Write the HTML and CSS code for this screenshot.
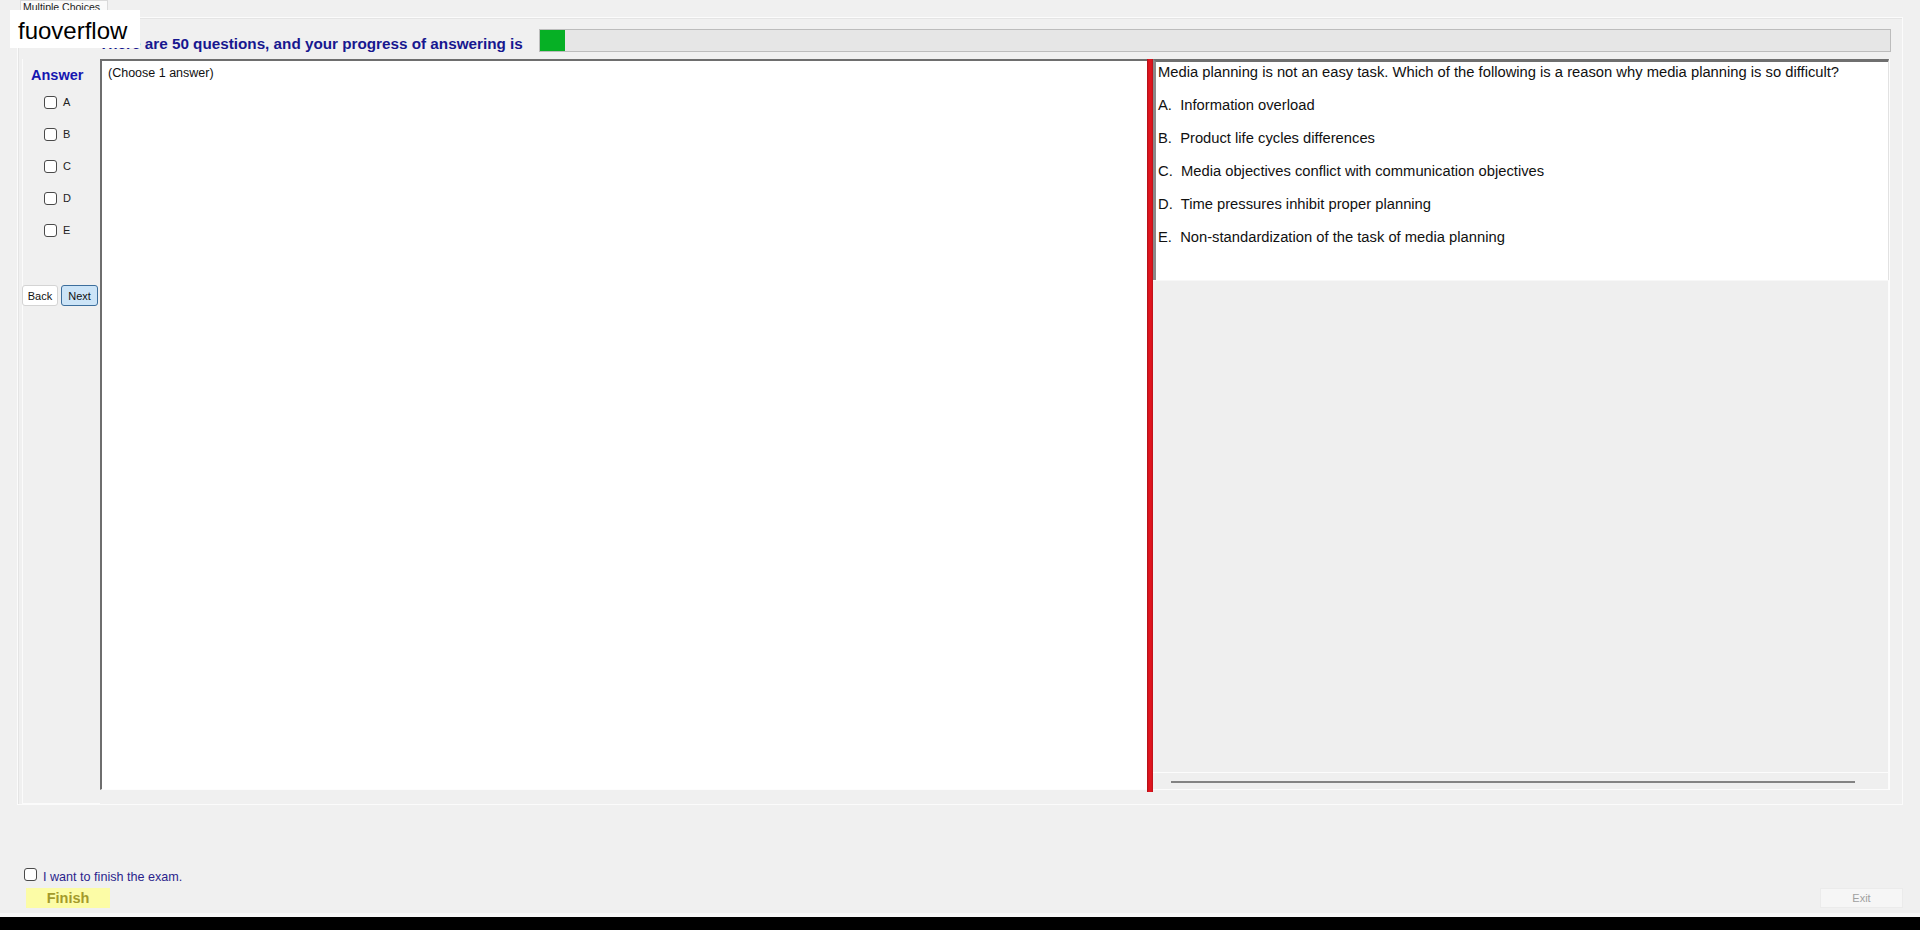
FILE: index.html
```html
<!DOCTYPE html>
<html lang="en">
<head>
<meta charset="utf-8">
<title>Multiple Choices</title>
<link rel="stylesheet" href="styles.css">
</head>
<body>
<div class="watermark">fuoverflow</div>
<div class="tabstrip"><div class="tab">Multiple Choices</div></div>
<div class="tabpanel">
  <div class="header">
    <div class="heading">There are 50 questions, and your progress of answering is</div>
    <div class="progress"><div class="progress-fill" style="width:25px"></div></div>
  </div>
  <div class="content">
    <div class="answer-col">
      <div class="answer-title">Answer</div>
      <ul class="choices">
        <li class="choice"><span class="cb"></span><span>A</span></li>
        <li class="choice"><span class="cb"></span><span>B</span></li>
        <li class="choice"><span class="cb"></span><span>C</span></li>
        <li class="choice"><span class="cb"></span><span>D</span></li>
        <li class="choice"><span class="cb"></span><span>E</span></li>
      </ul>
      <div class="nav">
        <button class="btn btn-back">Back</button>
        <button class="btn btn-next">Next</button>
      </div>
    </div>
    <div class="work-box">(Choose 1 answer)</div>
    <div class="splitter"></div>
    <div class="question-col">
      <div class="question-box">
        <p>Media planning is not an easy task. Which of the following is a reason why media planning is so difficult?</p>
        <p>A.&nbsp; Information overload</p>
        <p>B.&nbsp; Product life cycles differences</p>
        <p>C.&nbsp; Media objectives conflict with communication objectives</p>
        <p>D.&nbsp; Time pressures inhibit proper planning</p>
        <p>E.&nbsp; Non-standardization of the task of media planning</p>
      </div>
      <div class="lower">
        <div class="hscroll"><div class="hscroll-line"></div></div>
      </div>
    </div>
  </div>
</div>
<div class="footer">
  <div class="finish-check"><span class="cb"></span><span class="finish-label">I want to finish the exam.</span></div>
  <div class="footer-buttons">
    <button class="finish">Finish</button>
    <button class="exit">Exit</button>
  </div>
</div>
<div class="strip"></div>
<div class="taskbar"></div>
</body>
</html>
```

FILE: styles.css
```css
* { box-sizing: border-box; }

html, body {
  margin: 0;
  padding: 0;
}

body {
  width: 1920px;
  height: 930px;
  overflow: hidden;
  background: #f0f0f0;
  font-family: "Liberation Sans", Arial, sans-serif;
  color: #111;
  display: flex;
  flex-direction: column;
  position: relative;
}

.watermark {
  position: absolute;
  top: 10px;
  left: 10px;
  width: 130px;
  height: 38px;
  background: #fff;
  color: #000;
  font-size: 24px;
  line-height: 34px;
  padding: 4px 0 0 8px;
  z-index: 5;
}

/* tab strip */
.tabstrip {
  height: 17px;
  padding-left: 20px;
  display: flex;
  align-items: flex-start;
}

.tab {
  width: 88px;
  height: 18px;
  background: #fafafa;
  border: 1px solid #dadada;
  border-bottom: none;
  font-size: 10.5px;
  line-height: 12px;
  color: #222;
  padding-left: 2px;
  position: relative;
  z-index: 1;
  overflow: hidden;
  white-space: nowrap;
}

.tabpanel {
  margin-left: 17px;
  width: 1886px;
  height: 788px;
  border: 1px solid #fbfbfb;
  box-shadow: inset 1px 1px 0 #e4e4e4;
}

/* header */
.header {
  display: flex;
  align-items: flex-start;
  height: 23px;
  margin-top: 11px;
  padding-left: 81px;
  padding-right: 11px;
}

.heading {
  font-size: 15.25px;
  font-weight: bold;
  color: #17178f;
  line-height: 23px;
  padding-top: 3px;
  white-space: nowrap;
}

.progress {
  flex: 1;
  margin-left: 16px;
  height: 23px;
  border: 1px solid #bcbcbc;
  background: #e6e6e6;
}

.progress-fill {
  height: 100%;
  background: #06b025;
}

/* content */
.content {
  display: flex;
  align-items: flex-start;
  margin-top: 7px;
  margin-left: 4px;
  height: 733px;
}

.answer-col {
  width: 78px;
  height: 745px;
  border-left: 1px solid #fbfbfb;
  border-bottom: 1px solid #fbfbfb;
  display: flex;
  flex-direction: column;
}

.answer-title {
  margin-top: 7px;
  padding-left: 8px;
  font-size: 14.5px;
  font-weight: bold;
  line-height: 18px;
  color: #1616b0;
}

.choices {
  list-style: none;
  margin: 2px 0 0;
  padding: 0;
}

.choice {
  height: 32px;
  display: flex;
  align-items: center;
  gap: 6px;
  padding-left: 21px;
  font-size: 11px;
  color: #222;
}

.cb {
  display: inline-block;
  width: 13px;
  height: 13px;
  flex: none;
  background: #fff;
  border: 1px solid #4a4a4a;
  border-radius: 3px;
}

.nav {
  display: flex;
  gap: 3px;
  margin-top: 39px;
  margin-left: -1px;
}

.btn {
  height: 21px;
  padding: 0;
  font-family: "Liberation Sans", Arial, sans-serif;
  font-size: 11px;
  color: #111;
  border-radius: 3px;
  cursor: default;
}

.btn-back {
  width: 36px;
  background: #fff;
  border: 1px solid #d4d4d4;
}

.btn-next {
  width: 37px;
  background: #cce4f7;
  border: 1px solid #3c6e9c;
}

.work-box {
  width: 1047px;
  height: 731px;
  background: #fff;
  border-top: 2px solid #6e6e6e;
  border-left: 2px solid #6e6e6e;
  border-bottom: 1px solid #fdfdfd;
  padding: 5px 6px;
  font-size: 12.5px;
  line-height: 15px;
  color: #111;
}

.splitter {
  width: 6px;
  height: 733px;
  background: linear-gradient(to right, #a90f16, #e0151e 30%, #e0151e 70%, #b8111a);
}

.question-col {
  width: 737px;
  height: 731px;
  display: flex;
  flex-direction: column;
  border-right: 1px solid #fdfdfd;
}

.question-box {
  height: 221px;
  background: #fff;
  border-top: 3px solid #6f6f6f;
  border-left: 3px solid #8a8a8a;
  border-right: 1px solid #e2e2e2;
  padding: 2px 0 0 2px;
  font-size: 14.75px;
  color: #111;
}

.question-box p {
  margin: 0 0 16px;
  line-height: 17px;
  white-space: nowrap;
}

.lower {
  flex: 1;
  display: flex;
  flex-direction: column;
  justify-content: flex-end;
  background: #efefef;
  border-top: 1px solid #f7f7f7;
  border-right: 1px solid #fcfcfc;
}

.hscroll {
  height: 18px;
  border-top: 1px solid #fcfcfc;
  border-bottom: 1px solid #fcfcfc;
  padding: 8px 33px 0 18px;
}

.hscroll-line {
  height: 2px;
  background: #838383;
}

/* footer */
.footer {
  height: 108px;
  padding: 63px 17px 0 24px;
  display: flex;
  flex-direction: column;
}

.finish-check {
  display: flex;
  align-items: flex-start;
  gap: 6px;
}

.finish-label {
  margin-top: 2px;
  font-size: 12.6px;
  line-height: 15px;
  color: #2b1f8c;
}

.footer-buttons {
  display: flex;
  margin-top: 3px;
}

.finish {
  margin-left: 2px;
  width: 84px;
  height: 20px;
  padding: 0;
  border: none;
  background: #fcfca6;
  font-family: "Liberation Sans", Arial, sans-serif;
  font-size: 14.5px;
  font-weight: bold;
  color: #a39a2b;
}

.exit {
  margin-left: auto;
  width: 83px;
  height: 20px;
  padding: 0;
  border: 1px solid #ebebeb;
  background: #f6f6f6;
  font-family: "Liberation Sans", Arial, sans-serif;
  font-size: 11px;
  color: #a0a0a0;
}

.strip {
  height: 4px;
  background: #f8f8f8;
}

.taskbar {
  height: 13px;
  background: #000;
}
```
